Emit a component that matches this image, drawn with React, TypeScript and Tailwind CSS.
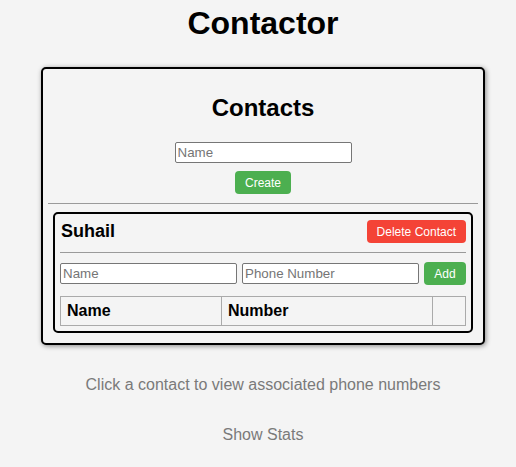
export default function App() {
  return (
    <div className="min-h-screen bg-[#f4f4f4] pl-[10px] text-black" style={{ fontFamily: '"Liberation Sans", Arial, sans-serif' }}>
      <h1 className="pt-[5px] text-center text-[32px] font-bold leading-[37px]">Contactor</h1>

      <div className="mx-auto mt-[25px] w-[444px] rounded-[5px] border-2 border-black bg-[#f4f4f4] px-[10px] pb-[10px] pt-[25px] shadow-[1px_1px_5px_rgba(0,0,0,0.45)]">
        <h2 className="text-center text-[24px] font-bold leading-[28px]">Contacts</h2>

        <div className="mt-[20px] flex flex-col items-center">
          <input
            placeholder="Name"
            className="h-[21px] w-[177px] rounded-[2px] border border-[#767676] bg-white px-[2px] text-[13.33px] placeholder:text-[#757575]"
          />
          <button className="mt-[8px] h-[23px] rounded-[4px] bg-[#4caf50] px-[10px] text-[12px] text-white">Create</button>
        </div>

        <div className="-mx-[5px] mt-[9px] h-px bg-[#9a9a9a]" />

        {/* contact card */}
        <div className="mt-[8px] rounded-[5px] border-2 border-black px-[5px] pb-[5px] pt-[6px]">
          <div className="flex h-[23px] items-center justify-between">
            <span className="pl-[1px] text-[18px] font-bold">Suhail</span>
            <button className="h-[23px] rounded-[4px] bg-[#f44336] px-[10px] text-[12px] text-white">Delete Contact</button>
          </div>

          <div className="mt-[9px] h-px bg-[#9a9a9a]" />

          <div className="mt-[9px] flex h-[23px] items-center gap-[5px]">
            <input
              placeholder="Name"
              className="h-[21px] w-[177px] rounded-[2px] border border-[#767676] bg-white px-[2px] text-[13.33px] placeholder:text-[#757575]"
            />
            <input
              placeholder="Phone Number"
              className="h-[21px] w-[177px] rounded-[2px] border border-[#767676] bg-white px-[2px] text-[13.33px] placeholder:text-[#757575]"
            />
            <button className="h-[23px] w-[42px] rounded-[4px] bg-[#4caf50] text-[12px] text-white">Add</button>
          </div>

          <table className="mt-[11px] w-full border-collapse text-[16px]">
            <thead>
              <tr>
                <th className="w-[161px] border border-[#aaaaaa] px-[6px] py-[5px] text-left font-bold leading-[18px]">Name</th>
                <th className="w-[211px] border border-[#aaaaaa] px-[6px] py-[5px] text-left font-bold leading-[18px]">Number</th>
                <th className="border border-[#aaaaaa] px-[6px] py-[5px]"></th>
              </tr>
            </thead>
          </table>
        </div>
      </div>

      <p className="mt-[31px] text-center text-[16px] leading-[18px] text-[#7a7a7a]">Click a contact to view associated phone numbers</p>
      <div className="mt-[29px] text-center">
        <button className="text-[16px] leading-[18px] text-[#7a7a7a]">Show Stats</button>
      </div>
    </div>
  );
}
